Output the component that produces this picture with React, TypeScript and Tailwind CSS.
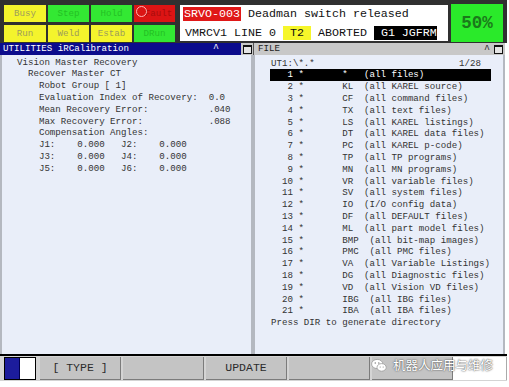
const statusBoxes = [
  { label: 'Busy', tone: 'y' },
  { label: 'Step', tone: 'g' },
  { label: 'Hold', tone: 'g' },
  { label: 'Fault', tone: 'r' },
  { label: 'Run', tone: 'y' },
  { label: 'Weld', tone: 'y' },
  { label: 'Estab', tone: 'y' },
  { label: 'DRun', tone: 'g' },
];

const toneClass: Record<string, string> = {
  y: 'bg-[#f4f42c] text-[#9c9c5c]',
  g: 'bg-[#33e833] text-[#24c024]',
  r: 'bg-[#dc1414] text-[#a80c0c]',
};

const leftLines = [
  'Vision Master Recovery',
  '  Recover Master CT',
  '    Robot Group [ 1]',
  '    Evaluation Index of Recovery:  0.0',
  '    Mean Recovery Error:           .040',
  '    Max Recovery Error:            .088',
  '    Compensation Angles:',
  '    J1:    0.000   J2:    0.000',
  '    J3:    0.000   J4:    0.000',
  '    J5:    0.000   J6:    0.000',
];

const files = [
  ['*', 'all files'],
  ['KL', 'all KAREL source'],
  ['CF', 'all command files'],
  ['TX', 'all text files'],
  ['LS', 'all KAREL listings'],
  ['DT', 'all KAREL data files'],
  ['PC', 'all KAREL p-code'],
  ['TP', 'all TP programs'],
  ['MN', 'all MN programs'],
  ['VR', 'all variable files'],
  ['SV', 'all system files'],
  ['IO', 'I/O config data'],
  ['DF', 'all DEFAULT files'],
  ['ML', 'all part model files'],
  ['BMP', 'all bit-map images'],
  ['PMC', 'all PMC files'],
  ['VA', 'all Variable Listings'],
  ['DG', 'all Diagnostic files'],
  ['VD', 'all Vision VD files'],
  ['IBG', 'all IBG files'],
  ['IBA', 'all IBA files'],
];

function MaxIcon() {
  return <div className="w-[9px] h-[9px] border border-[#111] border-t-[2px] bg-[#e4e4e4]" />;
}

export default function App() {
  return (
    <div className="relative w-[509px] h-[387px] bg-white overflow-hidden font-['Liberation_Mono','Courier_New',monospace]">
      <div className="w-[507px]">
        {/* 상단 상태 바 */}
        <div className="flex h-[43px] bg-[#303030]">
          <div className="grid grid-cols-[42px_41px_41px_41px] grid-rows-[17px_17px] gap-x-[2px] gap-y-[3px] pl-[4px] pt-[5px]">
            {statusBoxes.map((b) => (
              <div
                key={b.label}
                className={`relative flex items-center justify-center text-[9.15px] ${toneClass[b.tone]}`}
              >
                {b.tone === 'r' && (
                  <span className="absolute left-[2px] top-[1px] w-[11px] h-[11px] rounded-full border border-[#ffb4b4]" />
                )}
                <span className={b.tone === 'r' ? 'pl-[8px]' : ''}>{b.label}</span>
              </div>
            ))}
          </div>

          <div className="ml-[5px] mt-[5px] w-[268px] h-[36px] bg-white text-[11.67px] text-[#111] pt-[1px]">
            <div className="h-[16px] leading-[16px] pl-[3px] whitespace-pre">
              <span className="bg-[#e01818] text-white px-[1px]">SRVO-003</span> Deadman switch released
            </div>
            <div className="mt-[4px] h-[14px] leading-[14px] pl-[5px] whitespace-pre">
              VMRCV1 LINE 0 <span className="bg-[#f6f62a]"> T2 </span> ABORTED <span className="bg-black text-white"> G1 JGFRM</span>
            </div>
          </div>

          <div className="ml-[3px] mt-[4px] w-[52px] h-[38px] bg-[#2aea2a] flex items-center justify-center text-[17.5px] font-bold text-[#1a7a1a]">
            50%
          </div>
        </div>

        {/* 패널 영역 */}
        <div className="flex h-[311px] text-[9.15px] text-[#333]">
          {/* 왼쪽 패널 */}
          <div className="w-[253px] flex flex-col">
            <div className="flex h-[12px]">
              <div className="w-[241px] bg-[#0c0c8c] text-white flex items-center leading-[12px] pl-[3px]">
                <span className="whitespace-pre">UTILITIES iRCalibration</span>
                <span className="ml-auto mr-[22px] text-[10px]">^</span>
              </div>
              <div className="flex-1 bg-[#c8c8c8] flex items-center justify-center">
                <MaxIcon />
              </div>
            </div>
            <div className="flex-1 bg-[#e9eef9] border-l-2 border-r-2 border-[#b4b8c0] pl-[15px] pt-[1.6px] leading-[11.8px]">
              {leftLines.map((l, i) => (
                <div key={i} className="whitespace-pre h-[11.8px]">
                  {l}
                </div>
              ))}
            </div>
          </div>

          {/* 오른쪽 패널 */}
          <div className="w-[252px] flex flex-col">
            <div className="flex items-center h-[12px] bg-[#c8c8c8] border-l border-[#555] pl-[4px] pr-[2px] text-[#222]">
              <span>FILE</span>
              <span className="ml-auto mr-[4px] text-[10px]">^</span>
              <MaxIcon />
            </div>
            <div className="flex-1 bg-[#e9eef9] border-l-2 border-r-2 border-[#b4b8c0] pl-[16px] pt-[2.6px] leading-[11.8px]">
              <div className="flex w-[210px] h-[11.8px]">
                <span className="whitespace-pre">UT1:\*.*</span>
                <span className="ml-auto">1/28</span>
              </div>
              {files.map(([code, desc], i) => {
                const line = `${String(i + 1).padStart(4)} *       ${code.padEnd(2)}  (${desc})`;
                return (
                  <div
                    key={i}
                    className={`whitespace-pre h-[11.8px] ${
                      i === 0 ? 'bg-black text-white w-[221px] -ml-[1px] pl-[1px]' : ''
                    }`}
                  >
                    {line}
                  </div>
                );
              })}
              <div className="whitespace-pre h-[11.8px]">Press DIR to generate directory</div>
            </div>
          </div>
        </div>

        {/* 하단 펑션 키 */}
        <div className="flex h-[27px] border-t-2 border-black bg-[#d4d4d4] pt-[1px] pb-[1px] text-[11.5px] text-[#2c2c2c]">
          <div className="ml-[4px] w-[32px] border border-black flex">
            <div className="w-[15px] bg-[#1c1c9c] border-r border-[#000050]" />
            <div className="flex-1 bg-white" />
          </div>
          <div className="ml-[4px] flex gap-[2px]">
            {['[ TYPE ]', '', 'UPDATE', '', ''].map((t, i) => (
              <div
                key={i}
                className="w-[81px] bg-[#c4c4c4] border-r border-b border-[#7c7c7c] flex items-center justify-center whitespace-pre"
              >
                {t}
              </div>
            ))}
          </div>
          <div className="flex-1 bg-white border-r border-[#aaa]" />
        </div>
      </div>

      {/* 워터마크 */}
      <div className="absolute left-[371px] top-[356px] flex items-center gap-[6px]">
        <svg width="16" height="15" viewBox="0 0 16 15">
          <ellipse cx="6.2" cy="6" rx="5.6" ry="4.6" fill="white" stroke="#9a9a9a" strokeWidth="0.8" />
          <ellipse cx="10.6" cy="9.4" rx="4.6" ry="3.8" fill="white" stroke="#9a9a9a" strokeWidth="0.8" />
          <circle cx="4.3" cy="5" r="0.8" fill="#888" />
          <circle cx="7.8" cy="5" r="0.8" fill="#888" />
          <circle cx="9.2" cy="9" r="0.6" fill="#888" />
          <circle cx="12.2" cy="9" r="0.6" fill="#888" />
        </svg>
        <span className="font-['Noto_Sans_CJK_SC',sans-serif] text-[12.5px] text-white [text-shadow:0_0_2px_#555,0_0_1px_#666]">
          机器人应用与维修
        </span>
      </div>
    </div>
  );
}
